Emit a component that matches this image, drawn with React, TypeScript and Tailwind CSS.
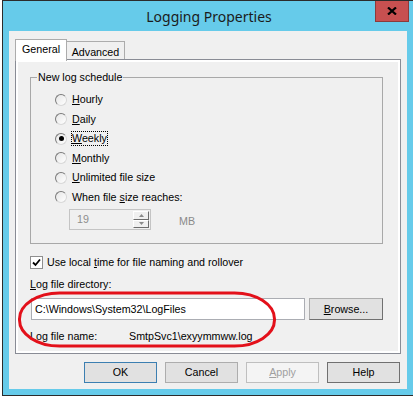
import React from "react";

function Radio({ checked = false }: { checked?: boolean }) {
  return (
    <span className="w-[12px] h-[12px] shrink-0 rounded-full border border-t-[#7a7a7a] border-l-[#7a7a7a] border-b-[#d8d8d8] border-r-[#d8d8d8] bg-gradient-to-br from-[#e6e6e6] to-white flex items-center justify-center">
      {checked && <span className="w-[5px] h-[5px] rounded-full bg-black" />}
    </span>
  );
}

function RadioRow({
  children,
  checked = false,
  focus = false,
}: {
  children: React.ReactNode;
  checked?: boolean;
  focus?: boolean;
}) {
  return (
    <div className="flex items-center h-[19.5px] pl-[24px] gap-[4px]">
      <Radio checked={checked} />
      <span
        className={
          focus
            ? "border border-dotted border-black leading-[13px] px-0"
            : "border border-transparent leading-[13px] px-0"
        }
      >
        {children}
      </span>
    </div>
  );
}

function Btn({
  children,
  variant = "normal",
  width = "w-[73px]",
}: {
  children: React.ReactNode;
  variant?: "normal" | "default" | "disabled" | "dark";
  width?: string;
}) {
  let cls = "bg-[#e1e1e1] border-[#adadad] text-black";
  if (variant === "default") cls = "bg-[#e1e1e1] border-[#3c7fb1] text-black";
  if (variant === "disabled") cls = "bg-[#f4f4f4] border-[#bfbfbf] text-[#a0a0a0]";
  if (variant === "dark") cls = "bg-[#e1e1e1] border-[#707070] text-black";
  return (
    <div className={`${width} h-[21px] border ${cls} flex items-center justify-center`}>
      {children}
    </div>
  );
}

export default function App() {
  return (
    <div className="relative w-[413px] h-[398px] bg-white overflow-hidden font-['Liberation_Sans',Arial,sans-serif] text-[10.7px] leading-[13px] text-black">
      <div className="ml-[2px] w-[411px] h-[396px] border-l border-t border-b border-[#2b2b2b] bg-[#66cbea] flex flex-col">
        {/* title bar */}
        <div className="relative h-[30px] shrink-0 flex items-center justify-center">
          <span className="font-['Noto_Sans',sans-serif] text-[14px] leading-[18px] text-[#1b1b1b] pt-[1px] ml-[2px]">
            Logging Properties
          </span>
          <div className="absolute top-0 right-[4px] w-[34px] h-[21px] bg-[#c75050] border border-t-0 border-[#8c3a3a] flex items-center justify-center">
            <svg width="10" height="8" viewBox="0 0 10 8">
              <path d="M1 0.5 L9 7.5 M9 0.5 L1 7.5" stroke="#000" strokeWidth="2.2" fill="none" />
            </svg>
          </div>
        </div>

        {/* client area */}
        <div className="ml-[6px] w-[398px] h-[358px] bg-[#f0f0f0] px-[6px] pt-[8px] flex flex-col">
          {/* tabs */}
          <div className="flex items-end h-[20px] shrink-0 relative z-10">
            <div className="w-[52px] h-[22px] -mb-[2px] bg-white border border-b-0 border-[#acacac] flex justify-center pt-[3px]">
              General
            </div>
            <div className="w-[58px] h-[18px] border border-l-0 border-b-0 border-[#acacac] bg-[#f0f0f0] flex justify-center pt-[4px]">
              Advanced
            </div>
          </div>

          {/* panel */}
          <div className="h-[295px] shrink-0 border border-[#898c95] bg-[#f0f0f0]">
            <div className="h-full border-2 border-white flex flex-col">
              <fieldset className="mt-[9px] ml-[12px] mr-[15px] border border-[#a8a8a8] pt-[6px] pb-[13px]">
                <legend className="ml-[6px] px-[1px] leading-[13px]">New log schedule</legend>
                <RadioRow>
                  <u>H</u>ourly
                </RadioRow>
                <RadioRow>
                  <u>D</u>aily
                </RadioRow>
                <RadioRow checked focus>
                  <u>W</u>eekly
                </RadioRow>
                <RadioRow>
                  <u>M</u>onthly
                </RadioRow>
                <RadioRow>
                  <u>U</u>nlimited file size
                </RadioRow>
                <RadioRow>
                  When file <u>s</u>ize reaches:
                </RadioRow>
                <div className="mt-[2px] ml-[38px] flex items-start">
                  <div className="w-[82px] h-[21px] border border-[#c4c4c4] bg-[#f0f0f0] flex">
                    <div className="flex-1 pl-[7px] flex items-center text-[#8d8d8d]">19</div>
                    <div className="w-[17px] flex flex-col py-[1px] pr-[1px]">
                      <div className="h-[9px] border border-t-white border-l-white border-b-[#6d6d6d] border-r-[#6d6d6d] bg-[#f0f0f0] flex items-center justify-center">
                        <svg width="5" height="3" viewBox="0 0 5 3">
                          <path d="M2.5 0 L5 3 L0 3 Z" fill="#8a8a8a" />
                        </svg>
                      </div>
                      <div className="h-[9px] border border-t-white border-l-white border-b-[#6d6d6d] border-r-[#6d6d6d] bg-[#f0f0f0] flex items-center justify-center">
                        <svg width="5" height="3" viewBox="0 0 5 3">
                          <path d="M0 0 L5 0 L2.5 3 Z" fill="#8a8a8a" />
                        </svg>
                      </div>
                    </div>
                  </div>
                  <span className="ml-[28px] mt-[6px] text-[#8a8a8a]">MB</span>
                </div>
              </fieldset>

              <div className="mt-[12px] ml-[12px] flex items-center gap-[4px] h-[13px]">
                <span className="w-[13px] h-[13px] border border-[#8f8f8f] bg-white flex items-center justify-center">
                  <svg width="9" height="9" viewBox="0 0 9 9">
                    <path d="M1 4.5 L3.5 7 L8 1.5" stroke="#000" strokeWidth="1.8" fill="none" />
                  </svg>
                </span>
                <span>
                  Use local <u>t</u>ime for file naming and rollover
                </span>
              </div>

              <div className="mt-[9px] ml-[12px]">
                <u>L</u>og file directory:
              </div>

              <div className="mt-[7px] ml-[13px] flex gap-[4px]">
                <div className="w-[274px] h-[22px] bg-white border border-[#abadb3] flex items-center pl-[3px]">
                  C:\Windows\System32\LogFiles
                </div>
                <div className="w-[74px] h-[22px] border border-[#adadad] border-r-[#707070] border-b-[#707070] bg-[#e1e1e1] flex items-center justify-center">
                  <span>
                    <u>B</u>rowse...
                  </span>
                </div>
              </div>

              <div className="mt-[10px] ml-[12px] flex">
                <span className="w-[99px]">Log file name:</span>
                <span>SmtpSvc1\exyymmww.log</span>
              </div>
            </div>
          </div>

          {/* buttons */}
          <div className="mt-[8px] flex justify-end gap-[8px] pr-[1px]">
            <Btn variant="default">OK</Btn>
            <Btn>Cancel</Btn>
            <Btn variant="disabled">
              <span>
                <u>A</u>pply
              </span>
            </Btn>
            <Btn variant="dark">Help</Btn>
          </div>
        </div>
      </div>

      {/* red annotation */}
      <svg className="absolute left-0 top-0 pointer-events-none" width="413" height="398" viewBox="0 0 413 398">
        <rect x="19.5" y="293" width="255" height="53" rx="40" ry="26" fill="none" stroke="#e3101a" strokeWidth="3" />
      </svg>
    </div>
  );
}
